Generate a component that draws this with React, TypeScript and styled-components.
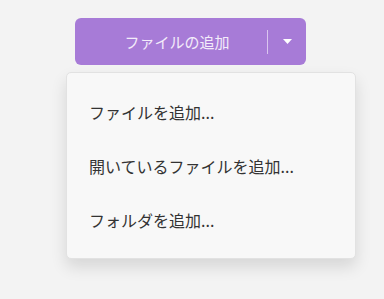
import React from "react";
import styled, { createGlobalStyle } from "styled-components";

const Global = createGlobalStyle`
  html, body { margin: 0; padding: 0; background: #f3f3f3; }
  body { font-family: "Noto Sans CJK JP", "Noto Sans", sans-serif; }
`;

const Page = styled.div`
  width: 384px;
  height: 299px;
  box-sizing: border-box;
  padding: 18px 0 0 75px;
  overflow: hidden;
`;

const Anchor = styled.div`
  position: relative;
  width: 231px;
`;

const SplitButton = styled.div`
  display: flex;
  align-items: center;
  height: 47px;
  border-radius: 6px;
  background: #a77bd7;
  color: #f3ecfa;
`;

const MainPart = styled.div`
  flex: 1;
  display: flex;
  align-items: center;
  justify-content: center;
  padding-left: 12px;
  font-size: 15px;
  height: 100%;
`;

const Divider = styled.div`
  width: 1px;
  height: 24px;
  background: rgba(240, 230, 250, 0.7);
`;

const Caret = styled.div`
  width: 38px;
  display: flex;
  align-items: center;
  justify-content: center;
`;

const Menu = styled.div`
  position: absolute;
  top: 54px;
  left: -9px;
  width: 290px;
  box-sizing: border-box;
  padding: 12px 0 11px;
  background: #f8f8f8;
  border: 1px solid #e2e2e2;
  border-radius: 5px;
  box-shadow: 0 8px 16px rgba(0, 0, 0, 0.12);
`;

const Item = styled.div`
  height: 54px;
  display: flex;
  align-items: center;
  padding-left: 22px;
  font-size: 16px;
  color: #333333;
`;

export default function App() {
  return (
    <Page>
      <Global />
      <Anchor>
        <SplitButton>
          <MainPart>ファイルの追加</MainPart>
          <Divider />
          <Caret>
            <svg width="9" height="5" viewBox="0 0 9 5">
              <path d="M0 0 L9 0 L4.5 5 Z" fill="#ffffff" />
            </svg>
          </Caret>
        </SplitButton>
        <Menu>
          <Item>ファイルを追加...</Item>
          <Item>開いているファイルを追加...</Item>
          <Item>フォルダを追加...</Item>
        </Menu>
      </Anchor>
    </Page>
  );
}
